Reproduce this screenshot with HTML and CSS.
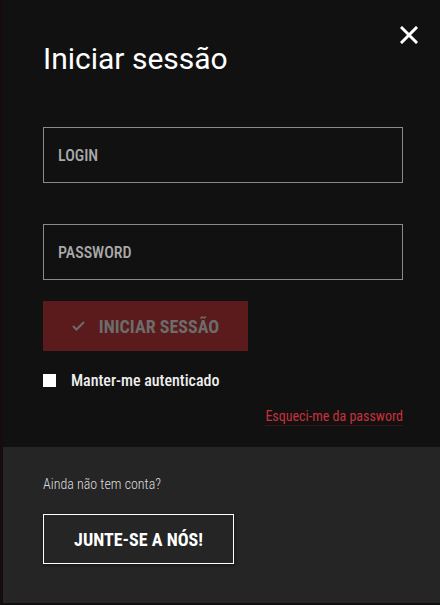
FILE: index.html
```html
<!DOCTYPE html>
<html lang="pt">
<head>
    <meta charset="UTF-8">
    <meta name="viewport" content="width=device-width, initial-scale=1.0">
    <title>Iniciar sessão</title>
    <link rel="stylesheet" href="styles.css">
</head>
<body>

<div class="modal">
    <div class="modal-main">
        <button class="close-btn" aria-label="Fechar">
            <svg width="18" height="18" viewBox="0 0 18 18">
                <path d="M2 2 L16 16 M16 2 L2 16" stroke="#fff" stroke-width="3" stroke-linecap="square"/>
            </svg>
        </button>

        <h1 class="modal-title">Iniciar sessão</h1>

        <form class="login-form">
            <input class="field" type="text" placeholder="LOGIN">
            <input class="field" type="password" placeholder="PASSWORD">

            <button type="button" class="submit-btn">
                <svg width="13" height="10" viewBox="0 0 13 10">
                    <path d="M1 5 L4.5 8.5 L12 1" fill="none" stroke="#6c6c6c" stroke-width="2"/>
                </svg>
                Iniciar sessão
            </button>

            <label class="remember">
                <span class="check-box"></span>
                Manter-me autenticado
            </label>

            <div class="forgot-row">
                <a href="#" class="forgot-link">Esqueci-me da password</a>
            </div>
        </form>
    </div>

    <div class="modal-footer">
        <p class="footer-text">Ainda não tem conta?</p>
        <button class="join-btn">Junte-se a nós!</button>
    </div>
</div>

</body>
</html>
```

FILE: styles.css
```css
/* Page behind the modal */
body {
    margin: 0;
    padding: 0;
    background-color: #140c0d;
    font-family: 'Roboto Condensed', 'Roboto', sans-serif;
    height: 605px;
    overflow: hidden;
}

.modal {
    margin-left: 3px;
    width: 437px;
    height: 603px;
    display: flex;
    flex-direction: column;
}

.modal-main {
    position: relative;
    background-color: #111111;
    padding: 41px 37px 0 40px;
    height: 406px;
}

.close-btn {
    position: absolute;
    top: 26px;
    right: 22px;
    background: none;
    border: none;
    padding: 0;
    width: 18px;
    height: 18px;
    cursor: pointer;
}

.close-btn svg {
    display: block;
}

.modal-title {
    margin: 0;
    font-family: 'Roboto', sans-serif;
    font-weight: 400;
    font-size: 30px;
    line-height: 36px;
    color: #ffffff;
}

.login-form {
    display: flex;
    flex-direction: column;
    margin-top: 50px;
}

.field {
    box-sizing: border-box;
    width: 360px;
    height: 56px;
    margin: 0 0 41px;
    padding: 0 14px;
    background-color: #111111;
    border: 1px solid #8a8a8a;
    color: #aaaaaa;
    font-family: inherit;
    font-size: 16px;
    font-weight: 500;
    outline: none;
}

.field::placeholder {
    color: #a9a9a9;
    opacity: 1;
}

.field + .field {
    margin-bottom: 21px;
}

.submit-btn {
    display: flex;
    align-items: center;
    justify-content: center;
    gap: 14px;
    width: 205px;
    height: 50px;
    padding: 0;
    background-color: #5b1a1b;
    border: none;
    color: #6c6c6c;
    font-family: inherit;
    font-size: 18px;
    font-weight: 700;
    text-transform: uppercase;
    cursor: default;
}

.remember {
    display: flex;
    align-items: center;
    gap: 15px;
    margin-top: 20px;
    color: #eeeeee;
    font-size: 16px;
    font-weight: 500;
}

.check-box {
    width: 13px;
    height: 13px;
    background-color: #ffffff;
}

.forgot-row {
    display: flex;
    justify-content: flex-end;
    width: 360px;
    margin-top: 18px;
}

.forgot-link {
    color: #c8313a;
    font-size: 14px;
    text-decoration: none;
    border-bottom: 1px solid #3a1315;
    padding-bottom: 1px;
}

.modal-footer {
    flex: 1;
    background-color: #252525;
    padding: 29px 40px 0;
}

.footer-text {
    margin: 0;
    color: #dddddd;
    font-size: 14px;
    font-weight: 300;
    line-height: 17px;
}

.join-btn {
    margin-top: 21px;
    width: 191px;
    height: 50px;
    background-color: #252525;
    border: 1px solid #ffffff;
    box-shadow: 0 1px 3px rgba(0, 0, 0, 0.5);
    color: #ffffff;
    font-family: inherit;
    font-size: 18px;
    font-weight: 700;
    text-transform: uppercase;
    cursor: pointer;
}
```
